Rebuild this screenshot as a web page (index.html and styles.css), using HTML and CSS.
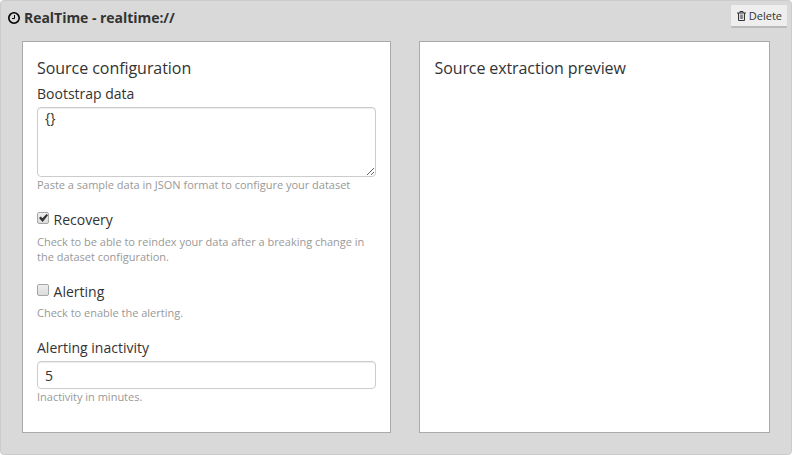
FILE: index.html
```html
<!DOCTYPE html>
<html lang="en">
<head>
<meta charset="utf-8">
<title>Source</title>
<link rel="stylesheet" href="styles.css">
</head>
<body>
<section class="source">
  <header class="source-header">
    <h1 class="source-title">
      <svg class="clock" viewBox="0 0 12 12"><circle cx="6" cy="6" r="5.2" fill="none" stroke="currentColor" stroke-width="1.6"/><path d="M6.5 3v3.5H4" fill="none" stroke="currentColor"/></svg>
      <span>RealTime - realtime://</span>
    </h1>
    <button class="delete" type="button">
      <svg class="trash" viewBox="0 0 9 10"><path d="M0 2h9M3 2V.5h3V2M1.5 2v7.5h6V2" fill="none" stroke="currentColor"/><path d="M3.3 3.5V8M4.5 3.5V8M5.7 3.5V8" fill="none" stroke="currentColor" stroke-width=".6"/></svg>
      <span>Delete</span>
    </button>
  </header>
  <div class="panels">
    <form class="panel">
      <h2 class="panel-title">Source configuration</h2>
      <label class="label" for="data">Bootstrap data</label>
      <textarea class="control area" id="data">{}</textarea>
      <p class="help">Paste a sample data in JSON format to configure your dataset</p>
      <label class="check-row first"><input class="check" type="checkbox" checked><span>Recovery</span></label>
      <p class="help check-help">Check to be able to reindex your data after a breaking change in the dataset configuration.</p>
      <label class="check-row second"><input class="check" type="checkbox"><span>Alerting</span></label>
      <p class="help check-help second-help">Check to enable the alerting.</p>
      <label class="label inactivity" for="minutes">Alerting inactivity</label>
      <input class="control field" id="minutes" value="5">
      <p class="help">Inactivity in minutes.</p>
    </form>
    <section class="panel">
      <h2 class="panel-title preview-title">Source extraction preview</h2>
    </section>
  </div>
</section>
</body>
</html>
```

FILE: styles.css
```css
* { box-sizing: border-box; }
body { margin: 0; background: #fff; color: #333; font: 14px/20px "Open Sans", sans-serif; }
.source { height: 455px; background: #d9d9d9; border: 1px solid #ccc; border-radius: 4px; }
.source-header { display: flex; justify-content: space-between; height: 40px; padding: 3px 4px 0 7px; }
.source-title { display: flex; align-items: center; gap: 4px; height: 28px; margin: 0; font-size: 14px; line-height: 20px; letter-spacing: -0.04px; }
.clock { width: 12px; height: 12px; color: #000; }
.delete { display: flex; align-items: center; gap: 3px; height: 23px; margin-top: 1px; padding: 0 5px 0 6px; border: 0; border-bottom: 2px solid #bbb; border-radius: 1px; background: #eee; color: #333; font: 11px/18px "Open Sans", sans-serif; }
.trash { width: 9px; height: 10px; }
.panels { display: grid; grid-template-columns: 369px 351px; column-gap: 28px; height: 392px; padding-left: 21px; }
.panel { border: 1px solid #aaa; background: #fff; padding: 16px 14px 0; }
.panel-title { margin: 0; font-size: 16px; line-height: 20px; font-weight: 400; letter-spacing: -0.05px; }
.preview-title { letter-spacing: -0.1px; padding-left: 0.5px; }
.label { display: block; margin-top: 6px; }
.control { display: block; width: 100%; border: 1px solid #ccc; border-radius: 4px; background: #fff; color: #333; font: 14px/20px "Open Sans", sans-serif; padding: 2px 7px; box-shadow: inset 0 1px 1px rgba(0,0,0,.075); outline: 0; }
.area { height: 70px; margin-top: 3px; padding-top: 0; }
.field { height: 28px; margin-top: 3px; }
.help { margin: 0; color: #999; font-size: 11px; line-height: 16px; letter-spacing: -0.01px; }
.check-row { display: flex; align-items: center; gap: 4.6px; }
.check { appearance: none; position: relative; top: -2px; width: 12px; height: 12px; margin: 0; border: 1px solid #a6a6a6; border-radius: 2px; background: linear-gradient(#eee, #dcdcdc); }
.check:checked::after { content: ""; position: absolute; left: 1px; top: 1px; width: 9px; height: 8px; background: #333; clip-path: polygon(0 50%, 20% 32%, 38% 54%, 84% 0, 100% 16%, 40% 100%); }
.first { margin-top: 17px; }
.second { margin-top: 18px; }
.check-help { margin-top: 4px; line-height: 15px; }
.second-help { margin-top: 3px; }
.inactivity { margin-top: 18px; }
```
